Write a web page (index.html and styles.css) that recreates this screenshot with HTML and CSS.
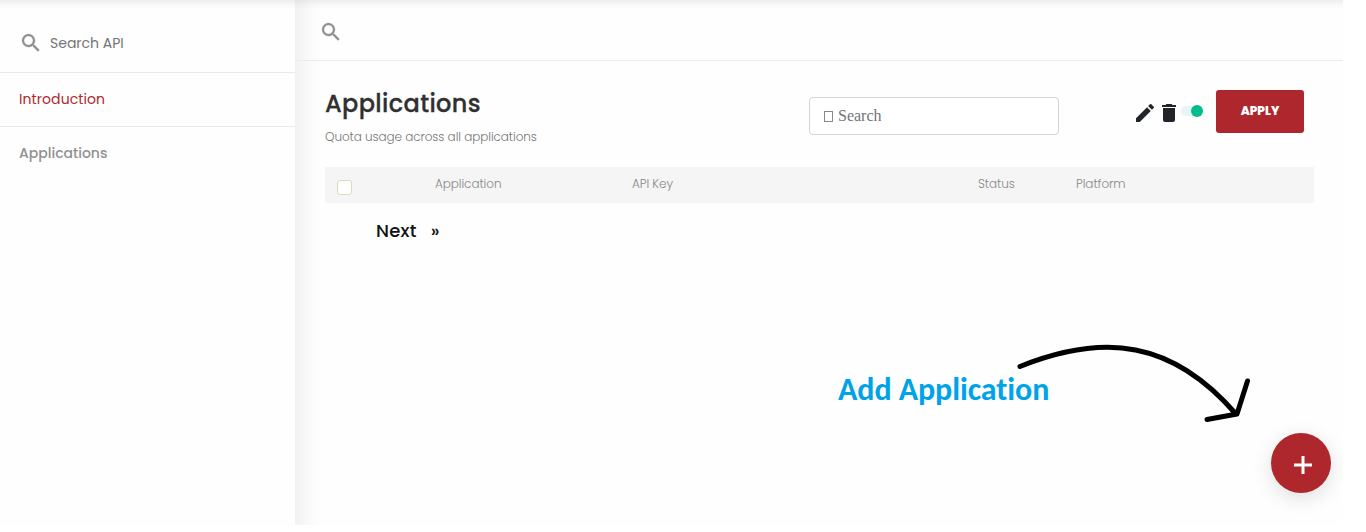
FILE: index.html
```html
<!DOCTYPE html>
<html lang="en">
<head>
<meta charset="utf-8">
<title>Applications</title>
<link rel="stylesheet" href="styles.css">
</head>
<body>
<div class="app">
  <aside class="sidebar">
    <div class="side-search">
      <svg class="icon" viewBox="0 0 24 24"><path d="M15.5 14h-.79l-.28-.27A6.47 6.47 0 0 0 16 9.5 6.5 6.5 0 1 0 9.5 16c1.61 0 3.09-.59 4.23-1.57l.27.28v.79l5 4.99L20.49 19l-4.99-5zm-6 0a4.5 4.5 0 1 1 0-9 4.5 4.5 0 0 1 0 9z"/></svg>
      <span class="side-search-text">Search API</span>
    </div>
    <a class="side-link active">Introduction</a>
    <a class="side-link last">Applications</a>
  </aside>
  <main class="main">
    <header class="topbar">
      <svg class="icon" viewBox="0 0 24 24"><path d="M15.5 14h-.79l-.28-.27A6.47 6.47 0 0 0 16 9.5 6.5 6.5 0 1 0 9.5 16c1.61 0 3.09-.59 4.23-1.57l.27.28v.79l5 4.99L20.49 19l-4.99-5zm-6 0a4.5 4.5 0 1 1 0-9 4.5 4.5 0 0 1 0 9z"/></svg>
    </header>
    <section class="content">
      <div class="heading">
        <div class="titles">
          <h1 class="title">Applications</h1>
          <p class="subtitle">Quota usage across all applications</p>
        </div>
        <div class="search-field"><span class="field-icon"></span><span>Search</span></div>
        <div class="actions">
          <svg class="icon dark" viewBox="0 0 24 24"><path d="M3 17.25V21h3.75L17.81 9.94l-3.75-3.75L3 17.25zM20.71 7.04a1 1 0 0 0 0-1.41l-2.34-2.34a1 1 0 0 0-1.41 0l-1.83 1.83 3.75 3.75 1.83-1.83z"/></svg>
          <svg class="icon dark" viewBox="0 0 24 24"><path d="M6 19c0 1.1.9 2 2 2h8c1.1 0 2-.9 2-2V7H6v12zM19 4h-3.5l-1-1h-5l-1 1H5v2h14V4z"/></svg>
          <span class="toggle"><span class="knob"></span></span>
        </div>
        <button class="apply">APPLY</button>
      </div>
      <div class="table-head">
        <span class="checkbox"></span>
        <span class="th">Application</span>
        <span class="th">API Key</span>
        <span class="th">Status</span>
        <span class="th">Platform</span>
      </div>
      <div class="pager"><span class="next">Next</span><span>»</span></div>
    </section>
  </main>
  <span class="callout">Add Application</span>
  <svg class="arrow" viewBox="0 0 240 86"><path d="M10 26.5C94-7 162 0 226 74M197 79.500L227 74L237.500 41"/></svg>
  <button class="fab" aria-label="Add"><svg class="plus" viewBox="0 0 18 18"><path d="M9 0v18M0 9h18"/></svg></button>
</div>
</body>
</html>
```
FILE: styles.css
```css
* { box-sizing: border-box; }
body { margin: 0; background: #fff; font-family: Poppins, Inter, sans-serif; overflow: hidden; }
.app {
  position: relative; display: flex; width: 1343px; height: 525px;
  background: linear-gradient(#eee, #f9f9f9 5px, #fefefe 10px); overflow: hidden;
}
.sidebar { width: 295px; }
.icon { width: 24px; height: 24px; fill: #8f8f8f; stroke: #8f8f8f; stroke-width: .3; flex: none; display: block; }
.icon.dark { fill: #212529; stroke: none; }
.side-search {
  display: flex; align-items: center; gap: 7px; height: 73px;
  padding: 14px 0 0 19px; border-bottom: 1px solid #e9e9e9;
}
.side-search-text { font-size: 14px; color: #757575; }
.side-link {
  display: flex; align-items: center; height: 54px; padding-left: 19px;
  border-bottom: 1px solid #e9e9e9; font-size: 14px; color: #909090; font-weight: 500;
}
.side-link.last { border: 0; height: 53px; }
.side-link.active { color: #b0272d; font-weight: 400; letter-spacing: .08px; }
.main { flex: 1; background: linear-gradient(90deg, rgba(0,0,0,.052), rgba(0,0,0,.018) 13px, rgba(0,0,0,0) 26px); }
.topbar { height: 61px; padding: 20px 0 0 24px; border-bottom: 1px solid #ebebeb; }
.content { padding: 0 29px 0 30px; }
.heading { display: flex; align-items: flex-start; height: 106px; }
.titles { width: 484px; padding-top: 27px; }
.title { margin: 0; font-size: 24px; line-height: 32px; font-weight: 500; color: #303030; letter-spacing: .36px; -webkit-text-stroke: .3px #303030; }
.subtitle { margin: 8px 0 0; font-size: 12px; line-height: 18px; font-weight: 300; color: #777; letter-spacing: -.08px; }
.search-field {
  display: flex; align-items: center; width: 250px; height: 38px; margin-top: 36px; padding-left: 14px;
  border: 1px solid #ced4da; border-radius: 4px; background: #fff;
  font: 16px "Liberation Serif", serif; color: #6c757d; gap: 5px;
}
.field-icon { width: 9px; height: 11px; border: 1px solid #828a91; }
.actions { display: flex; align-items: center; width: 83px; margin: 40px 0 0 74px; height: 24px; }
.toggle { display: flex; justify-content: flex-end; align-items: center; width: 20px; height: 10px; border-radius: 5px; background: #e5f7f3; margin-top: -4px; }
.knob { width: 12px; height: 12px; flex: none; border-radius: 50%; background: #00bc8f; margin-right: -2px; }
.apply {
  width: 88px; height: 43px; margin-top: 29px; padding: 0 0 2px; border: 0; border-radius: 3px;
  background: #ae272d; color: #fff; font: 800 12px Poppins, Inter, sans-serif;
}
.table-head {
  display: grid; grid-template-columns: 98px 197px 346px 98px 1fr; height: 36px; padding-left: 12px;
  background: #f5f5f5; font-size: 12px; font-weight: 300; color: #888;
}
.checkbox { width: 15px; height: 15px; margin-top: 13px; border: 1px solid #dcdcb8; border-radius: 3px; background: #fff; }
.th { line-height: 34px; letter-spacing: -.08px; }
.pager { display: flex; gap: 14px; padding: 15px 0 0 51px; font-size: 18px; line-height: 26px; font-weight: 500; color: #111; }
.next { letter-spacing: .25px; }
.callout { position: absolute; left: 838px; top: 371px; font: 700 32px/38px Carlito, Lato, sans-serif; letter-spacing: -.08px; font-variant-ligatures: none; color: #00a2e8; white-space: nowrap; }
.arrow { position: absolute; left: 1010px; top: 340px; width: 240px; height: 86px; fill: none; stroke: #000; stroke-width: 5; stroke-linecap: round; stroke-linejoin: round; }
.fab {
  position: absolute; left: 1271px; top: 433px; width: 60px; height: 60px; padding: 4px 0 0 4px; border: 0; border-radius: 50%;
  display: grid; place-items: center; background: #ae272d; box-shadow: 0 5px 20px rgba(0,0,0,.13);
}
.plus { width: 18px; height: 18px; stroke: #fff; stroke-width: 3; }
```
